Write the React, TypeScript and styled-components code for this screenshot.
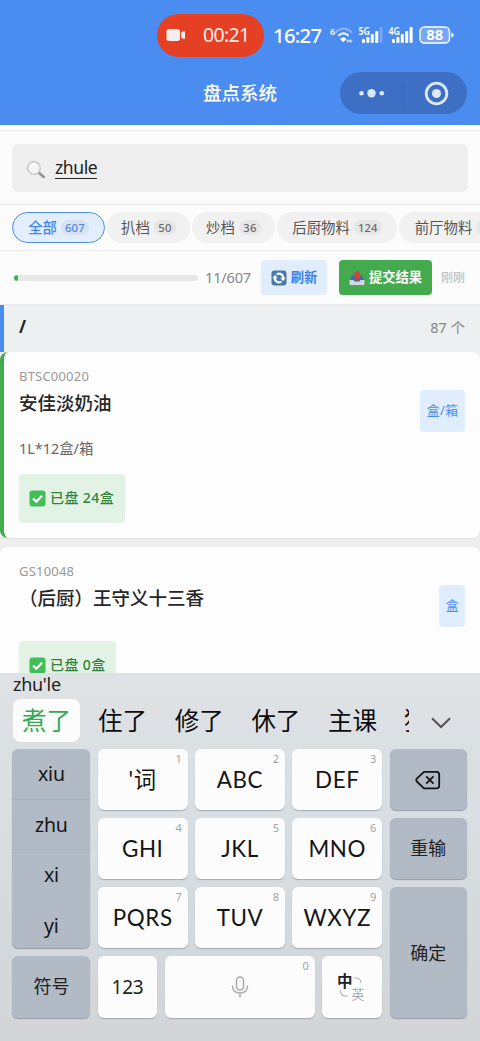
import React from "react";
import styled, { createGlobalStyle, css } from "styled-components";

const Global = createGlobalStyle`
  * { box-sizing: border-box; }
  body {
    margin: 0;
    background: #fcfcfc;
    font-family: "Noto Sans", "Noto Sans CJK SC", sans-serif;
    color: #222;
    -webkit-font-smoothing: antialiased;
  }
`;

const Screen = styled.div`
  width: 480px;
  height: 1041px;
  overflow: hidden;
  display: flex;
  flex-direction: column;
  background: #fcfcfc;
  white-space: nowrap;
`;

const Label = styled.span<{ $size: number; $color?: string; $weight?: number; $spacing?: number; $font?: string }>`
  display: block;
  flex: none;
  line-height: 1.3;
  font-size: ${(p) => p.$size}px;
  color: ${(p) => p.$color ?? "#222"};
  font-weight: ${(p) => p.$weight ?? 400};
  letter-spacing: ${(p) => p.$spacing ?? 0}px;
  ${(p) => p.$font && css`font-family: ${p.$font}, "Noto Sans CJK SC", sans-serif;`}
`;

/* ---------- header ---------- */
const Header = styled.header`
  flex: none;
  height: 125px;
  background: #4b8cf0;
`;

const StatusBar = styled.div`
  display: flex;
  align-items: center;
  height: 70px;
  padding-left: 157px;
`;

const RecordPill = styled.div`
  display: flex;
  align-items: center;
  width: 107px;
  height: 43px;
  margin-right: 9px;
  padding-left: 9px;
  gap: 17px;
  border-radius: 22px;
  background: #e53f24;
`;

const Clock = styled.div`
  width: 57px;
  font-size: 20.3px;
  line-height: 26px;
  font-weight: 500;
  letter-spacing: -0.7px;
  color: #fff;
`;

const TitleBar = styled.div`
  display: grid;
  grid-template-columns: 1fr auto 1fr;
  align-items: center;
  height: 46px;
  padding: 0 13px;
`;

const Capsule = styled.div`
  justify-self: end;
  display: flex;
  align-items: center;
  width: 127px;
  height: 42px;
  border-radius: 21px;
  background: #3d70c4;
`;

/* ---------- search and filters ---------- */
const SearchArea = styled.div`
  flex: none;
  height: 75px;
  margin-top: 5px;
  padding: 13px 12px 12px;
  border-top: 1px solid #ececec;
  border-bottom: 1px solid #e8e8e8;
`;

const SearchBox = styled.div`
  display: flex;
  align-items: center;
  height: 48px;
  padding-left: 14px;
  gap: 9px;
  border-radius: 6px;
  background: #efefef;
`;

const Query = styled.div`
  height: 22px;
  border-bottom: 1px solid #222;
  font-size: 17.5px;
  line-height: 20px;
  letter-spacing: -0.4px;
`;

const Tabs = styled.nav`
  flex: none;
  display: flex;
  align-items: center;
  gap: 2px;
  height: 46px;
  padding-left: 12px;
  border-bottom: 1px solid #ececec;
  overflow: hidden;
`;

const Tab = styled.div<{ $active?: boolean; $width: number }>`
  flex: none;
  display: flex;
  align-items: center;
  justify-content: center;
  gap: 4px;
  width: ${(p) => p.$width}px;
  height: 31px;
  border-radius: 16px;
  background: ${(p) => (p.$active ? "#e2eefc" : "#f1f1f1")};
  border: ${(p) => (p.$active ? "1.5px solid #4b8cf0" : "0")};
  color: ${(p) => (p.$active ? "#4283ec" : "#555")};
  font-size: 14.4px;
  font-weight: ${(p) => (p.$active ? 500 : 400)};
  line-height: 20px;
`;

const Count = styled.span<{ $active?: boolean }>`
  min-width: 22px;
  padding: 0 4px;
  height: 15px;
  border-radius: 8px;
  text-align: center;
  background: ${(p) => (p.$active ? "#d6e2ef" : "#e6e6e6")};
  color: ${(p) => (p.$active ? "#4b86e0" : "#6b6b6b")};
  font-size: 11.2px;
  line-height: 15px;
  font-weight: 500;
  letter-spacing: 0.2px;
`;

const ProgressRow = styled.div`
  flex: none;
  display: flex;
  align-items: center;
  height: 54px;
  padding-left: 14px;
  border-bottom: 1px solid #e9e9e9;
`;

const Track = styled.div`
  width: 184px;
  height: 6px;
  margin-right: 7px;
  border-radius: 3px;
  background: #e8e8e8;
  overflow: hidden;
`;

const Fill = styled.div`
  width: 4px;
  height: 6px;
  border-radius: 3px;
  background: #43ad50;
`;

const ProgressText = styled.div`
  width: 56px;
  padding-bottom: 2px;
  font-size: 14.6px;
  line-height: 20px;
  letter-spacing: -0.2px;
  color: #888;
`;

const ActionButton = styled.div<{ $solid?: boolean; $width: number }>`
  flex: none;
  display: flex;
  align-items: center;
  justify-content: center;
  gap: 4px;
  width: ${(p) => p.$width}px;
  height: 35px;
  margin: ${(p) => (p.$solid ? "0 9px 0 12px" : "0")};
  border-radius: 4px;
  background: ${(p) => (p.$solid ? "#43ab4e" : "#e1edfc")};
`;

/* ---------- list ---------- */
const List = styled.main`
  flex: none;
  height: 368px;
  overflow: hidden;
  background: #eeeeee;
`;

const GroupHeader = styled.div`
  display: flex;
  align-items: center;
  justify-content: space-between;
  height: 47px;
  padding: 0 15px 2px;
  border-left: 4px solid #4b8cf0;
  background: #edf0f1;
`;

const Card = styled.article<{ $done?: boolean }>`
  display: flex;
  justify-content: space-between;
  height: 186px;
  margin-bottom: 9px;
  padding: 16px 15px 0 ${(p) => (p.$done ? 15 : 19)}px;
  border-left: ${(p) => (p.$done ? "4px solid #43ab4e" : "0")};
  border-radius: 8px;
  background: #fdfdfd;
  box-shadow: 0 1px 2px rgba(0, 0, 0, 0.06);
`;

const Details = styled.div`
  display: flex;
  flex-direction: column;
  align-items: flex-start;
`;

const Code = styled.div`
  height: 18px;
  font-size: 13px;
  line-height: 17px;
  letter-spacing: 0.2px;
  color: #999;
`;

const Name = styled.div`
  height: 34px;
  font-family: "Noto Sans CJK SC", sans-serif;
  font-size: 18.5px;
  line-height: 32px;
  font-weight: 500;
  color: #262626;
`;

const Spec = styled.div`
  height: 22px;
  margin-top: 18px;
  font-size: 14.4px;
  line-height: 22px;
  color: #666;
`;

const CountedBadge = styled.div<{ $width: number; $top: number }>`
  display: flex;
  align-items: center;
  gap: 4px;
  width: ${(p) => p.$width}px;
  height: 49px;
  margin-top: ${(p) => p.$top}px;
  padding-left: 10px;
  border-radius: 4px;
  background: #e2f3e5;
`;

const UnitBadge = styled.div`
  display: flex;
  align-items: center;
  height: 42px;
  margin-top: 22px;
  padding: 0 6.5px 2px;
  border-radius: 4px;
  background: #e0edfc;
`;

/* ---------- keyboard ---------- */
const Keyboard = styled.section`
  flex: none;
  height: 368px;
  background: linear-gradient(#dfe2e5, #d9dfe3 30%, #d3d8dc 80%, #d3d5d8);
`;

const Pinyin = styled.div`
  height: 26px;
  padding-left: 13px;
  font-size: 18px;
  line-height: 22px;
  letter-spacing: -0.3px;
`;

const Candidates = styled.div`
  display: flex;
  align-items: center;
  height: 43px;
  padding-left: 13px;
`;

const Candidate = styled.div<{ $width?: number; $selected?: boolean }>`
  flex: none;
  width: ${(p) => p.$width ?? 76.7}px;
  height: 43px;
  border-radius: 8px;
  text-align: ${(p) => (p.$selected ? "center" : "right")};
  font-size: 24.5px;
  line-height: 43px;
  background: ${(p) => (p.$selected ? "#fcfcfc" : "transparent")};
  color: ${(p) => (p.$selected ? "#2fab56" : "#0c0c0c")};
`;

const ClippedCandidate = styled.div`
  width: 5px;
  margin-left: 27px;
  margin-right: 22px;
  overflow: hidden;
  font-size: 24.5px;
  line-height: 43px;
  color: #0c0c0c;
`;

const Keys = styled.div`
  display: grid;
  grid-template-columns: 78px 90px 90px 90px 77.5px;
  grid-template-rows: 61px 61px 61px 62px;
  gap: 8px 7.3px;
  padding: 7px 0 0 12.4px;
`;

const Key = styled.div<{ $dark?: boolean }>`
  position: relative;
  display: flex;
  align-items: center;
  justify-content: center;
  border-radius: 6px;
  background: ${(p) => (p.$dark ? "#b2bac5" : "#fcfcfc")};
  box-shadow: 0 1px 1px ${(p) => (p.$dark ? "#949ca6" : "#a4a9ae")};
  color: #151515;
`;

const SyllableColumn = styled(Key)`
  grid-row: 1 / 4;
  flex-direction: column;
  align-items: stretch;
  justify-content: flex-start;
`;

const Syllable = styled.div<{ $line?: boolean }>`
  height: 50.7px;
  text-align: center;
  font-size: 19.5px;
  line-height: 50px;
  letter-spacing: -0.2px;
  border-bottom: 1px solid ${(p) => (p.$line ? "#a8b0bb" : "transparent")};
`;

const BottomRow = styled.div`
  grid-column: 2 / 5;
  display: grid;
  grid-template-columns: 59.5px 150px 60px;
  gap: 7.5px;
`;

const EnterKey = styled(Key)`
  grid-column: 5;
  grid-row: 3 / 5;
  padding-top: 2px;
`;

const Digit = styled.span`
  position: absolute;
  top: 3px;
  right: 6px;
  font-size: 11px;
  line-height: 14px;
  color: #a3a3a3;
`;

const CameraIcon = () => (
  <svg width="20" height="14" viewBox="0 0 20 14" fill="#f5eeee">
    <rect x="0.5" y="1" width="13.5" height="12" rx="2.5" />
    <path d="M15 4.7 17 3.2Q19 2.3 19 4V10Q19 11.7 17 10.8L15 9.3Z" />
  </svg>
);

const StatusIcons = () => (
  <svg width="126" height="24" viewBox="0 0 126 24" fill="#fff" fontFamily="Noto Sans" fontWeight="600">
    <text x="0" y="12" fontSize="9">6</text>
    <g fill="none" strokeWidth="2">
      <path d="M5.5 9.5Q13.5 1.5 21.5 9.5" stroke="#8eb6f5" />
      <path d="M8.5 12.7Q13.5 7.8 18.5 12.7" stroke="#fff" />
    </g>
    <path d="M10 16Q13.5 12.5 16.5 16L13.3 19.3Z" />
    <path d="M16 18 18.3 15.8V17H20.3V15.8L22.7 18 20.3 20.2V19H18.3V20.2Z" fill="#b9d2f9" />
    <text x="28.5" y="12" fontSize="10" textLength="11.5" lengthAdjust="spacingAndGlyphs">5G</text>
    <rect x="32" y="16" width="3" height="4" rx="1" />
    <rect x="36.4" y="14" width="3" height="6" rx="1" />
    <rect x="40.8" y="11" width="3" height="9" rx="1" />
    <rect x="45.2" y="8" width="3" height="12" rx="1" />
    <rect x="49.6" y="4" width="3" height="16" rx="1" fill="#78a8f4" />
    <text x="58.5" y="12" fontSize="10" textLength="11.5" lengthAdjust="spacingAndGlyphs">4G</text>
    <rect x="62" y="16" width="3" height="4" rx="1" />
    <rect x="66.4" y="14" width="3" height="6" rx="1" />
    <rect x="70.8" y="11" width="3" height="9" rx="1" />
    <rect x="75.2" y="8" width="3" height="12" rx="1" />
    <rect x="79.6" y="4" width="3" height="16" rx="1" />
    <rect x="90" y="4" width="29.5" height="16" rx="4.5" fill="#78a8f3" stroke="#fff" strokeWidth="1.4" />
    <text x="96.3" y="17.3" fontSize="14.5" fontWeight="700" textLength="17" lengthAdjust="spacingAndGlyphs">88</text>
    <path d="M121.3 9.5Q123.6 9.5 123.6 12T121.3 14.5Z" />
  </svg>
);

const CapsuleIcons = () => (
  <svg width="127" height="42" viewBox="0 0 127 42">
    <g fill="#dce7f8">
      <circle cx="21.5" cy="21.3" r="2.3" />
      <circle cx="31.5" cy="21.3" r="4.2" />
      <circle cx="41.8" cy="21.3" r="2.3" />
      <circle cx="96.5" cy="21.5" r="4.5" />
    </g>
    <path d="M63.5 10V33" stroke="#3565b4" />
    <circle cx="96.5" cy="21.5" r="10.3" fill="none" stroke="#dce7f8" strokeWidth="2.8" />
  </svg>
);

const SearchIcon = () => (
  <svg width="20" height="20" viewBox="0 0 20 20" fill="none" strokeLinecap="round">
    <path d="M13.2 15 17.8 19" stroke="#999" strokeWidth="2.8" />
    <circle cx="8" cy="10" r="6.3" fill="#f5f5f5" stroke="#c4c4c4" strokeWidth="1.3" />
    <path d="M4.7 9Q5.7 6.5 8.2 6.5" stroke="#fff" strokeWidth="1.2" />
  </svg>
);

const RefreshIcon = () => (
  <svg width="16" height="16" viewBox="0 0 16 16" fill="none">
    <rect x="0.5" y="0.5" width="15" height="15" rx="3" fill="#4a78ae" />
    <path d="M5.6 4.3Q9 2.6 11.3 5.2Q12.4 6.7 12.2 8.5M10.4 11.7Q7 13.4 4.7 10.8Q3.6 9.3 3.8 7.5" stroke="#fff" strokeWidth="2.2" />
    <path d="M9.3 7.8H14.6L12 11.2ZM1.4 8.2H6.7L4 4.8Z" fill="#fff" />
  </svg>
);

const OutboxIcon = () => (
  <svg width="16" height="16" viewBox="0 0 16 16">
    <path d="M2.8 5.5H13.2L15.5 11H0.5Z" fill="#3b6fa8" />
    <path d="M0.5 10H4.5Q5 11.8 6.5 11.8H9.5Q11 11.8 11.5 10H15.5V14.2Q15.5 15 14.7 15H1.3Q0.5 15 0.5 14.2Z" fill="#d2d9dd" />
    <path d="M8 0.8 11.4 3.6V4.7H10.3V9H5.7V4.7H4.6V3.6Z" fill="#d8403c" />
  </svg>
);

const CheckIcon = () => (
  <svg width="17" height="17" viewBox="0 0 17 17">
    <rect x="0.5" y="0.5" width="16" height="16" rx="3" fill="#43bd57" />
    <path d="M4 8.5 7.3 11.7 13 5.7" fill="none" stroke="#fff" strokeWidth="2.3" />
  </svg>
);

const Chevron = styled.svg`
  margin-top: 4px;
`;

const ChevronIcon = () => (
  <Chevron width="20" height="12" viewBox="0 0 20 12">
    <path d="M1 1.3 10 10 19 1.3" fill="none" stroke="#555" strokeWidth="2" />
  </Chevron>
);

const BackspaceIcon = () => (
  <svg width="26" height="20" viewBox="0 0 26 20" fill="none" stroke="#151515" strokeWidth="1.8" strokeLinejoin="round">
    <path d="M9 1.8H21.5Q24.2 1.8 24.2 4.5V15.8Q24.2 18.3 21.5 18.3H9L1.8 11.5Q0.8 10 1.8 8.6Z" />
    <path d="M11.2 6.3 18.5 13.6M18.5 6.3 11.2 13.6" />
  </svg>
);

const MicIcon = () => (
  <svg width="18" height="22" viewBox="0 0 18 22" fill="none" stroke="#aaa" strokeWidth="1.5" strokeLinecap="round">
    <rect x="5.5" y="1" width="7" height="13" rx="3.5" />
    <path d="M1.5 10Q2 17 9 17T16.5 10M9 17V21" />
  </svg>
);

const LanguageIcon = () => (
  <svg width="32" height="34" viewBox="0 0 32 34" fontFamily="Noto Sans CJK SC">
    <text x="1" y="17" fontSize="15.5" fontWeight="700" fill="#222">中</text>
    <text x="15.5" y="28.5" fontSize="12.8" fill="#aaa">英</text>
    <path d="M18 8H20Q25 8.5 25 13M4.5 20.5Q4.5 26 9 26H12" fill="none" stroke="#b5b5b5" strokeWidth="1.2" />
  </svg>
);

const letterKeys: [string, string][][] = [
  [["'词", "1"], ["ABC", "2"], ["DEF", "3"]],
  [["GHI", "4"], ["JKL", "5"], ["MNO", "6"]],
  [["PQRS", "7"], ["TUV", "8"], ["WXYZ", "9"]],
];

const tabs = [
  { name: "全部", count: "607", width: 93 },
  { name: "扒档", count: "50", width: 83 },
  { name: "炒档", count: "36", width: 83 },
  { name: "后厨物料", count: "124", width: 120 },
  { name: "前厅物料", count: "", width: 115 },
];

const LetterKey = ({ text, digit }: { text: string; digit: string }) => (
  <Key>
    <Label $size={22.4} $color="#151515" $spacing={0.6} $font="Lato">{text}</Label>
    <Digit>{digit}</Digit>
  </Key>
);

export default function App() {
  return (
    <>
      <Global />
      <Screen>
        <Header>
          <StatusBar>
            <RecordPill>
              <CameraIcon />
              <Label $size={19.5} $color="#fbeeee" $spacing={-0.7}>00:21</Label>
            </RecordPill>
            <Clock>16:27</Clock>
            <StatusIcons />
          </StatusBar>
          <TitleBar>
            <span />
            <Label $size={18.5} $color="#fff" $weight={500}>盘点系统</Label>
            <Capsule><CapsuleIcons /></Capsule>
          </TitleBar>
        </Header>

        <SearchArea>
          <SearchBox>
            <SearchIcon />
            <Query>zhule</Query>
          </SearchBox>
        </SearchArea>

        <Tabs>
          {tabs.map((t, i) => (
            <Tab key={t.name} $active={i === 0} $width={t.width}>
              {t.name}
              <Count $active={i === 0}>{t.count}</Count>
            </Tab>
          ))}
        </Tabs>

        <ProgressRow>
          <Track><Fill /></Track>
          <ProgressText>11/607</ProgressText>
          <ActionButton $width={66}>
            <RefreshIcon />
            <Label $size={13.3} $color="#3f80ea" $weight={700}>刷新</Label>
          </ActionButton>
          <ActionButton $solid $width={93}>
            <OutboxIcon />
            <Label $size={13.3} $color="#fff" $weight={700}>提交结果</Label>
          </ActionButton>
          <Label $size={12} $color="#b5b5b5">刚刚</Label>
        </ProgressRow>

        <List>
          <GroupHeader>
            <Label $size={17} $weight={700}>/</Label>
            <Label $size={14.5} $color="#888">87 个</Label>
          </GroupHeader>
          <Card $done>
            <Details>
              <Code>BTSC00020</Code>
              <Name>安佳淡奶油</Name>
              <Spec>1L*12盒/箱</Spec>
              <CountedBadge $width={106} $top={14}>
                <CheckIcon />
                <Label $size={14} $color="#33823b" $weight={500} $spacing={0.4}>已盘 24盒</Label>
              </CountedBadge>
            </Details>
            <UnitBadge><Label $size={12.8} $color="#4b8cf0" $spacing={0.5}>盒/箱</Label></UnitBadge>
          </Card>
          <Card>
            <Details>
              <Code>GS10048</Code>
              <Name>（后厨）王守义十三香</Name>
              <CountedBadge $width={97} $top={26}>
                <CheckIcon />
                <Label $size={14} $color="#33823b" $weight={500} $spacing={0.4}>已盘 0盒</Label>
              </CountedBadge>
            </Details>
            <UnitBadge><Label $size={12.8} $color="#4b8cf0">盒</Label></UnitBadge>
          </Card>
        </List>

        <Keyboard>
          <Pinyin>zhu'le</Pinyin>
          <Candidates>
            <Candidate $selected $width={67}>煮了</Candidate>
            <Candidate $width={67}>住了</Candidate>
            <Candidate>修了</Candidate>
            <Candidate>休了</Candidate>
            <Candidate>主课</Candidate>
            <ClippedCandidate>猪</ClippedCandidate>
            <ChevronIcon />
          </Candidates>
          <Keys>
            <SyllableColumn $dark>
              <Syllable $line>xiu</Syllable>
              <Syllable $line>zhu</Syllable>
              <Syllable>xi</Syllable>
              <Syllable>yi</Syllable>
            </SyllableColumn>
            {letterKeys[0].map(([t, d]) => <LetterKey key={d} text={t} digit={d} />)}
            <Key $dark><BackspaceIcon /></Key>
            {letterKeys[1].map(([t, d]) => <LetterKey key={d} text={t} digit={d} />)}
            <Key $dark><Label $size={18}>重输</Label></Key>
            {letterKeys[2].map(([t, d]) => <LetterKey key={d} text={t} digit={d} />)}
            <EnterKey $dark><Label $size={18}>确定</Label></EnterKey>
            <Key $dark><Label $size={18}>符号</Label></Key>
            <BottomRow>
              <Key><Label $size={19} $spacing={-0.3}>123</Label></Key>
              <Key><MicIcon /><Digit>0</Digit></Key>
              <Key><LanguageIcon /></Key>
            </BottomRow>
          </Keys>
        </Keyboard>
      </Screen>
    </>
  );
}
